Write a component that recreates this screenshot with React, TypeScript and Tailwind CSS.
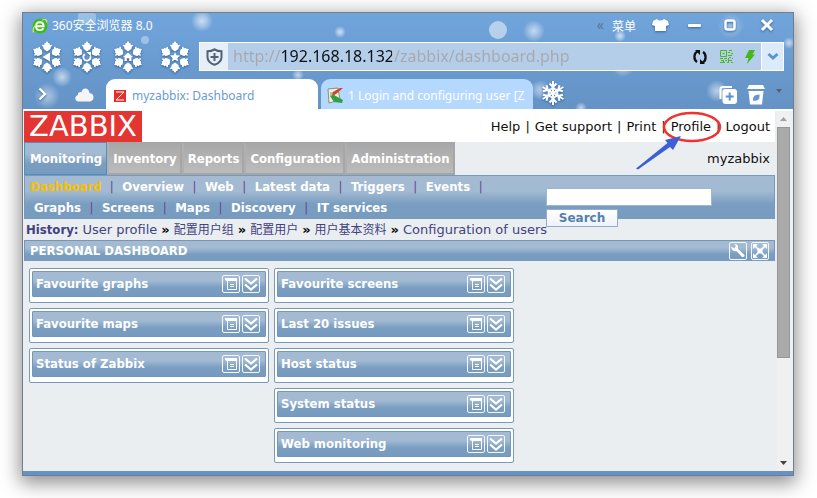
import React from "react";

const uiFont = "font-['Noto_Sans','Noto_Sans_CJK_SC',sans-serif]";
const pageFont = "font-['DejaVu_Sans','Noto_Sans_CJK_SC',sans-serif]";
const boldFont = "font-['DejaVu_Sans_Condensed','DejaVu_Sans',sans-serif] font-bold";
const barFill =
  "bg-[linear-gradient(#a4bad3_0%,#a2bad2_35%,#7a9ec1_65%,#769bbf_100%)]";

const glows: [number, number, number, number][] = [
  [179, 8, 11, 0.75],
  [39, 64, 10, 0.7],
  [24, 83, 13, 0.55],
  [317, 19, 6, 0.8],
  [511, 18, 11, 0.7],
  [275, 62, 6, 0.7],
  [438, 51, 6, 0.7],
  [597, 23, 6, 0.8],
  [600, 53, 11, 0.6],
  [631, 51, 7, 0.6],
  [708, 13, 13, 0.4],
  [766, 30, 6, 0.7],
  [694, 78, 11, 0.65],
  [558, 95, 6, 0.7],
  [517, 77, 10, 0.6],
];

function SnowBackdrop() {
  return (
    <svg
      className="pointer-events-none absolute left-0 top-0"
      width="770"
      height="97"
      viewBox="0 0 770 97"
      aria-hidden="true"
    >
      <defs>
        <radialGradient id="glow">
          <stop offset="0" stopColor="#fff" stopOpacity="0.85" />
          <stop offset="0.45" stopColor="#fff" stopOpacity="0.5" />
          <stop offset="1" stopColor="#fff" stopOpacity="0" />
        </radialGradient>
      </defs>
      {glows.map(([x, y, r, o]) => (
        <circle key={`${x}-${y}`} cx={x} cy={y} r={r} fill="url(#glow)" opacity={o} />
      ))}
      <path d="M55 2q0-2 3-2h12q3 0 3 2v6q-3 4-9 4t-9-4z" fill="#fff" opacity="0.3" />
      <circle cx="122" cy="27" r="4" fill="#fff" opacity="0.35" />
      <circle cx="475" cy="17" r="9" fill="#fff" opacity="0.5" />
    </svg>
  );
}

function Snowflake({ label, className, children }: { label: string; className: string; children: React.ReactNode }) {
  return (
    <button type="button" aria-label={label} className={className}>
      <svg width="32" height="34" viewBox="-16 -17 32 34" className="drop-shadow-[0_1px_1px_#2f5f94]">
        {[0, 60, 120, 180, 240, 300].map((a) => (
          <path
            key={a}
            transform={`rotate(${a})`}
            d="M0-5.600L-2.800-7.500-3.900-9-3.600-10-5.200-11.200-4.600-12.300-2.800-12-2.600-13.800-1.400-14 0-16 1.400-14 2.600-13.800 2.800-12 4.600-12.300 5.200-11.200 3.600-10 3.900-9 2.800-7.500z"
            fill="#fff"
          />
        ))}
        {children}
      </svg>
    </button>
  );
}

function Globe() {
  return (
    <svg width="16" height="16" viewBox="0 0 16 16" aria-hidden="true">
      <circle cx="8" cy="8" r="7.500" fill="#3fba1c" />
      <path d="M4 8.200h7.600c0-2.200-1.500-3.900-3.800-3.900S4 6 4 8.200s1.600 3.900 4 3.900c1.600 0 2.700-.6 3.500-1.800" fill="none" stroke="#fff" strokeWidth="1.900" />
      <path d="M1.500 14.500C.5 11 2 8.500 4 6.500M14.500 4.500C15.500 1.500 13 .8 10 2.200" fill="none" stroke="#c9ef4d" strokeWidth="1.200" />
    </svg>
  );
}

function TitleBar() {
  const tool = "drop-shadow-[0_1px_1px_#35669b]";
  return (
    <div className={`relative flex h-[29px] items-center pl-[9px] text-white ${uiFont}`}>
      <div className="flex items-center pb-[3px]">
        <Globe />
        <span className="ml-1 text-[12px] leading-5">360安全浏览器 8.0</span>
      </div>
      <div className="ml-auto flex items-center pb-[6px]">
        <span className="mr-2 text-[14px] text-[#587795]">«</span>
        <button type="button" className="mr-4 pt-[5px] text-[12px]">菜单</button>
        <button type="button" aria-label="Skins" className="mr-[19px]">
          <svg width="17" height="14" viewBox="0 0 17 14" className={tool}>
            <path d="M5 1q3.500 3 7 0l4 2 1 4-3 1v5H3V8L0 7l1-4z" fill="#fff" />
          </svg>
        </button>
        <button type="button" aria-label="Minimize" className="mr-[21px]">
          <svg width="14" height="14" viewBox="0 0 14 14" className={tool}>
            <rect x="0" y="6" width="13" height="3" rx="1" fill="#fff" />
          </svg>
        </button>
        <button type="button" aria-label="Maximize" className="mr-[23px]">
          <svg width="14" height="14" viewBox="0 0 14 14" className={tool}>
            <rect x="2.500" y="2.500" width="9" height="9" rx="2" fill="none" stroke="#fff" strokeWidth="2.500" />
          </svg>
        </button>
        <button type="button" aria-label="Close" className="mr-[19px]">
          <svg width="14" height="14" viewBox="0 0 14 14" className={tool}>
            <path d="M3 3l8 8M11 3l-8 8" stroke="#fff" strokeWidth="3" strokeLinecap="square" />
          </svg>
        </button>
      </div>
    </div>
  );
}

function QrIcon() {
  return (
    <svg width="13" height="13" viewBox="0 0 13 13" aria-hidden="true">
      <g fill="none" stroke="#48b81c">
        <path d="M.5.5h6v6h-6zM2.500 3.500h2M9 .5h3M8 2.500h2M11 3.500h2M8 5.500h4M9 7.500h2" />
        <path d="M0 8.500h3M4 8.500h3M12 8.500h1M1 10.500h2M5 10.500h2M8 10.500h4M0 12.500h5M7 12.500h2M11 12.500h2M8.500 8v4M3.500 10v2" />
      </g>
    </svg>
  );
}

function Toolbar() {
  return (
    <div className={`relative flex h-[29px] items-center pl-[8px] pr-[9px] ${uiFont}`}>
      <Snowflake label="Back" className="mr-2">
        <path d="M3-4.500v9l-7.500-4.500z" fill="#fff" />
      </Snowflake>
      <Snowflake label="Reload" className="mr-[9px]">
        <path d="M-2.200-2.700A3.500 3.500 0 1 0 3.300-.8" fill="none" stroke="#fff" strokeWidth="1.800" />
        <path d="M-.5-5h4.500v4.500z" fill="#fff" />
      </Snowflake>
      <Snowflake label="Home" className="mr-[15px]">
        <path d="M0-4.500l5 4.500H3.500v4H1.200V1.200h-2.400V4H-3.500V0H-5z" fill="#fff" />
      </Snowflake>
      <Snowflake label="Favourites" className="mr-[8px]">
        <path d="M0-5l1.500 3.300 3.700.3L2.400 1 3.300 4.600 0 2.700-3.300 4.600-2.400 1-5.200-1.400l3.700-.3z" fill="#fff" />
      </Snowflake>
      <form className="flex h-full flex-1 border border-white bg-[#b4cee9]" onSubmit={(e) => e.preventDefault()}>
        <span className="flex w-[28px] items-center justify-center bg-[#e6eef7]">
          <svg width="17" height="18" viewBox="0 0 17 18" aria-hidden="true">
            <path d="M8.500 1.300C6 3 4 3.300 1.500 3.300V9c0 4 3 6.500 7 7.800 4-1.300 7-3.800 7-7.800V3.300C13 3.300 11 3 8.500 1.300z" fill="none" stroke="#4f6276" strokeWidth="2" />
            <path d="M8.500 5v8M4.500 9h8" stroke="#4f6276" strokeWidth="2" />
          </svg>
        </span>
        <input
          aria-label="Address"
          defaultValue="http://192.168.18.132/zabbix/dashboard.php"
          className="min-w-0 flex-1 bg-[linear-gradient(90deg,#a8a8ab_52px,#0a0f14_52px,#0a0f14_164px,#a8a8ab_164px)] bg-clip-text pl-[5px] text-[16px] leading-[27px] text-transparent outline-none"
        />
        <span className="flex items-center gap-3 pr-[6px]">
          <button type="button" aria-label="Refresh">
            <svg width="16" height="16" viewBox="0 0 16 16">
              <path d="M5.500 2.500C1.500 4 1.500 11 5 13M10.500 13.500c4-1.500 4-8.500.5-10.500" fill="none" stroke="#111" strokeWidth="2.300" />
              <path d="M3 1h5v5zM13 15H8v-5z" fill="#111" />
            </svg>
          </button>
          <QrIcon />
          <svg width="10" height="14" viewBox="0 0 10 14" aria-hidden="true">
            <path d="M4 0h6L7.500 4.500H10L2 14l1.500-6H0z" fill="#42b81d" />
          </svg>
        </span>
        <button type="button" aria-label="Address history" className="flex w-[22px] items-center justify-center border-l border-white bg-[#dcebfc]">
          <svg width="12" height="9" viewBox="0 0 12 9">
            <path d="M1.500 2L6 6l4.500-4" fill="none" stroke="#5b93cd" strokeWidth="3" />
          </svg>
        </button>
      </form>
    </div>
  );
}

function TabStrip() {
  return (
    <div className={`relative flex h-[40px] items-end border-b-2 border-white pr-[11px] ${uiFont}`}>
      <div className="flex h-[30px] w-[83px] items-center">
        <button type="button" aria-label="Expand" className="ml-[14px]">
          <svg width="12" height="14" viewBox="0 0 12 14" className="drop-shadow-[0_1px_1px_#35669b]">
            <path d="M2.500 1.500L8 7l-5.500 5.500" fill="none" stroke="#fff" strokeWidth="2.300" />
          </svg>
        </button>
        <button type="button" aria-label="Cloud" className="ml-[26px]">
          <svg width="19" height="15" viewBox="0 0 19 15">
            <path d="M4 14.500C-1 14.500-.5 8.500 3 8c-.5-3 3-3.500 3.500-2.500C7 0 14 0 14.500 6c5 0 5.500 8 .5 8.500z" fill="#f5f5f7" />
          </svg>
        </button>
      </div>
      <button type="button" className="flex h-[30px] w-[212px] items-center rounded-t-[9px] bg-white pl-2 pt-[3px] text-[12px] text-[#6b9bd1]">
        <svg width="12" height="12" viewBox="0 0 12 12" className="mr-[6px]" aria-hidden="true">
          <rect width="12" height="12" fill="#e12f2d" />
          <path d="M2 2h8L2 10h8" fill="none" stroke="#fff" />
        </svg>
        myzabbix: Dashboard
      </button>
      <button type="button" className="ml-[3px] flex h-[30px] w-[212px] items-center rounded-t-[9px] bg-[#b5d8fe] pl-[6px] pt-[3px] text-[12px] text-white">
        <svg width="17" height="17" viewBox="0 0 17 17" className="mr-1 shrink-0" aria-hidden="true">
          <path d="M1 2l10-1 2 12-11 3z" fill="#f2efdc" stroke="#8f8d75" />
          <path d="M3 6h6M3 8h5M4 10h4" stroke="#71966d" />
          <path d="M16 1L9 7l-4 2 1-4 7-4z" fill="#d6402c" />
          <path d="M3 9l4-1 9 5-1 3-8-1z" fill="#2da248" />
        </svg>
        <span className="whitespace-nowrap">1 Login and configuring user [Z</span>
      </button>
      <button type="button" aria-label="New tab" className="mb-[3px] ml-[7px]">
        <svg width="26" height="26" viewBox="-13 -13 26 26" className="drop-shadow-[0_1px_1px_#35669b]">
          {[0, 60, 120, 180, 240, 300].map((a) => (
            <path key={a} transform={`rotate(${a})`} d="M0 0V-12M0-6l-3.500-3.500M0-6l3.500-3.500M0-3l-2-2M0-3l2-2" stroke="#fff" strokeWidth="2" fill="none" />
          ))}
        </svg>
      </button>
      <div className="mb-[4px] ml-auto flex items-center gap-[10px]">
        <button type="button" aria-label="Reopen tab">
          <svg width="18" height="18" viewBox="0 0 18 18">
            <path d="M1.500 13V3q0-2 2-2H13" fill="none" stroke="#fff" strokeWidth="2" />
            <rect x="3.500" y="3" width="14.500" height="15" rx="3" fill="#fff" />
            <path d="M10.700 6.500v8M6.700 10.500h8" stroke="#5d92ca" strokeWidth="2" />
          </svg>
        </button>
        <button type="button" aria-label="Clear traces">
          <svg width="18" height="20" viewBox="0 0 18 20">
            <path d="M2 0h14l2 4H0zM1.500 6h15L15 19.500H3z" fill="#fff" />
            <path d="M6 16c0-5 1-6 6.500-6.500C13 14 11 16.500 7 15.500z" fill="#6797cc" />
          </svg>
        </button>
        <svg width="6" height="4" viewBox="0 0 6 4" className="mb-2 ml-[1px]" aria-hidden="true">
          <path d="M0 0h6L3 4z" fill="#56616e" />
        </svg>
      </div>
    </div>
  );
}

function ProfileMark() {
  return (
    <svg className="pointer-events-none absolute left-[-35px] top-[-9px]" width="90" height="64" viewBox="0 0 90 64" aria-hidden="true">
      <ellipse cx="56" cy="17" rx="28" ry="14" fill="none" stroke="#f03232" strokeWidth="2.500" />
      <path d="M0 58.500L31.500 33 29 30 45 26 37 40 34 37 2 59.500z" fill="#3d5fd6" />
    </svg>
  );
}

function PageHeader() {
  return (
    <header className="flex h-[31px] items-center bg-white pr-[5px]">
      <a href="#home" className="flex h-[31px] w-[118px] items-center justify-center bg-[#e33532] text-[29px] leading-[31px] text-white">
        ZABBIX
      </a>
      <nav className="ml-auto flex items-center gap-[5px] text-[13px] leading-4 text-[#101010]">
        <a href="#help">Help</a>
        <span>|</span>
        <a href="#support">Get support</a>
        <span>|</span>
        <a href="#print">Print</a>
        <span>|</span>
        <span className="relative">
          <a href="#profile">Profile</a>
          <ProfileMark />
        </span>
        <span>|</span>
        <a href="#logout">Logout</a>
      </nav>
    </header>
  );
}

const sections = ["Monitoring", "Inventory", "Reports", "Configuration", "Administration"];

function MainMenu() {
  return (
    <div className="flex h-[33px] items-center pr-[5px]">
      <nav className={`flex h-full text-[13px] text-white ${boldFont}`}>
        {sections.map((s, i) => (
          <a
            key={s}
            href={`#${s}`}
            className={
              i === 0
                ? "flex items-center border border-[#4f90c0] bg-[linear-gradient(#a4bad3_0%,#a2bad2_35%,#7a9ec1_65%,#769bbf_100%)] pl-[5px] pr-[4px]"
                : "flex items-center border-2 border-[#a6a6a6] border-l-[#b0b0b0] bg-[linear-gradient(#a8a8a8,#bcbcbc)] pl-[4px] pr-[3px]"
            }
          >
            {s}
          </a>
        ))}
      </nav>
      <span className="ml-auto text-[13px] text-[#101010]">myzabbix</span>
    </div>
  );
}

const rows = [
  ["Dashboard", "Overview", "Web", "Latest data", "Triggers", "Events"],
  ["Graphs", "Screens", "Maps", "Discovery", "IT services"],
];

function SubMenu() {
  return (
    <div className={`flex h-[44px] border border-b-0 border-[#7799bb] ${barFill}`}>
      <nav className={`w-[521px] pl-[5px] text-[13px] leading-[21px] text-white ${boldFont}`}>
        {rows.map((row, r) => (
          <div key={r} className={r === 0 ? "flex" : "flex pl-1"}>
            {row.map((item, i) => (
              <React.Fragment key={item}>
                <a href={`#${item}`} className={item === "Dashboard" ? "text-[#f9c000]" : ""}>{item}</a>
                {(r === 0 || i < row.length - 1) && (
                  <span className="w-[21px] text-center font-normal text-[#6b4690]">|</span>
                )}
              </React.Fragment>
            ))}
          </div>
        ))}
      </nav>
      <form className="flex flex-col items-start pt-3" onSubmit={(e) => e.preventDefault()}>
        <input aria-label="Search" className="h-[18px] w-[166px] shrink-0 border border-[#9db6d2] bg-white px-1 text-[12px] outline-none" />
        <button type="submit" className="mt-[3px] h-[18px] w-[72px] shrink-0 border border-[#93adce] bg-[linear-gradient(#ffffff,#eef2f8)] text-[12px] font-bold leading-4 text-[#5580ad]">
          Search
        </button>
      </form>
    </div>
  );
}

const crumbs = ["User profile", "配置用户组", "配置用户", "用户基本资料", "Configuration of users"];

function History() {
  return (
    <div className="flex h-[21px] items-center whitespace-nowrap pl-[2px] text-[13px] text-[#42427f]">
      <span className={`mr-1 ${boldFont}`}>History:</span>
      {crumbs.map((c, i) => (
        <React.Fragment key={c}>
          {i > 0 && <span className="mx-1 font-bold leading-4 text-black">»</span>}
          <a href={`#crumb-${i}`} className={i > 0 && i < 4 ? "text-[12px]" : ""}>{c}</a>
        </React.Fragment>
      ))}
    </div>
  );
}

function IconButton({ label, children }: { label: string; children: React.ReactNode }) {
  return (
    <button type="button" aria-label={label} className="flex h-[18px] w-[18px] items-center justify-center rounded-[2px] border border-[#f4f8fc]">
      <svg width="16" height="16" viewBox="0 0 16 16" className="shrink-0">{children}</svg>
    </button>
  );
}

function Widget({ title }: { title: string }) {
  return (
    <section className="h-[35px] rounded-[2px] border border-[#7b9abb] bg-white px-[2px] pt-[2px]">
      <div className={`flex h-[26px] items-center rounded-[1px] border border-[#7796b6] pl-[3px] pr-[5px] ${barFill}`}>
        <h2 className={`text-[13px] leading-4 text-white ${boldFont}`}>{title}</h2>
        <div className="ml-auto flex gap-[2px]">
          <IconButton label={`${title} menu`}>
            <path d="M2 2h12v3H4L2 4z" fill="#fff" />
            <path d="M4.500 4v9.500h9V4" fill="none" stroke="#fff" />
            <path d="M7 8.500h4M7 10.500h4" stroke="#fff" />
          </IconButton>
          <IconButton label={`Collapse ${title}`}>
            <path d="M2 2.500l6 5 6-5M2 8.500l6 5 6-5" fill="none" stroke="#fff" strokeWidth="2.200" />
          </IconButton>
        </div>
      </div>
    </section>
  );
}

const columns = [
  ["Favourite graphs", "Favourite maps", "Status of Zabbix"],
  ["Favourite screens", "Last 20 issues", "Host status", "System status", "Web monitoring"],
];

export default function App() {
  return (
    <div className="min-h-screen bg-white pb-[22px] pl-[22px] pr-[23px] pt-3">
      <div className="relative border border-[#737c8b] bg-[linear-gradient(#70a5dc_0px,#6492c4_98px,#6492c4_100%)] shadow-[0_5px_18px_2px_rgba(0,0,0,0.45)]">
        <SnowBackdrop />
        <TitleBar />
        <Toolbar />
        <TabStrip />
        <div className={`mb-1 flex min-h-[360px] bg-[#ebeef1] pl-[1px] ${pageFont}`}>
          <main className="min-w-0 flex-1">
            <PageHeader />
            <MainMenu />
            <SubMenu />
            <History />
            <div className={`flex h-[21px] items-center border border-b-0 border-[#7796b6] pl-[5px] pr-[5px] ${barFill}`}>
              <h1 className={`text-[13px] leading-4 text-white ${boldFont}`}>PERSONAL DASHBOARD</h1>
              <div className="ml-auto flex gap-1">
                <IconButton label="Configure">
                  <path d="M1 3.500l3.500 2L6 2.500 4 1q3-.5 4 2v3l6.500 6q.5 2.500-2.500 2L6.500 8Q2 9 1 3.500z" fill="#fff" />
                </IconButton>
                <IconButton label="Fullscreen">
                  <path d="M2 2l12 12M14 2L2 14" stroke="#fff" strokeWidth="1.600" />
                  <path d="M1 1h5L1 6zM15 1h-5l5 5zM1 15h5l-5-5zM15 15h-5l5-5zM5.500 5.500h5v5h-5z" fill="#fff" />
                </IconButton>
              </div>
            </div>
            <div className="flex gap-[5px] pl-[5px] pt-[7px]">
              {columns.map((col, i) => (
                <div key={i} className="flex w-[240px] flex-col gap-[5px]">
                  {col.map((title) => (
                    <Widget key={title} title={title} />
                  ))}
                </div>
              ))}
            </div>
          </main>
          <div className="ml-[2px] flex w-[16px] shrink-0 flex-col items-center bg-[#f0f0f0] py-[6px] pr-[3px]" aria-hidden="true">
            <svg width="7" height="4" viewBox="0 0 7 4"><path d="M0 4h7L3.500 0z" fill="#a0a0a0" /></svg>
            <div className="mt-[6px] h-[231px] w-[13px] shrink-0 border border-[#969696] bg-[#aaaaaa]" />
            <svg width="7" height="4" viewBox="0 0 7 4" className="mt-auto"><path d="M0 0h7L3.500 4z" fill="#454545" /></svg>
          </div>
        </div>
      </div>
    </div>
  );
}
